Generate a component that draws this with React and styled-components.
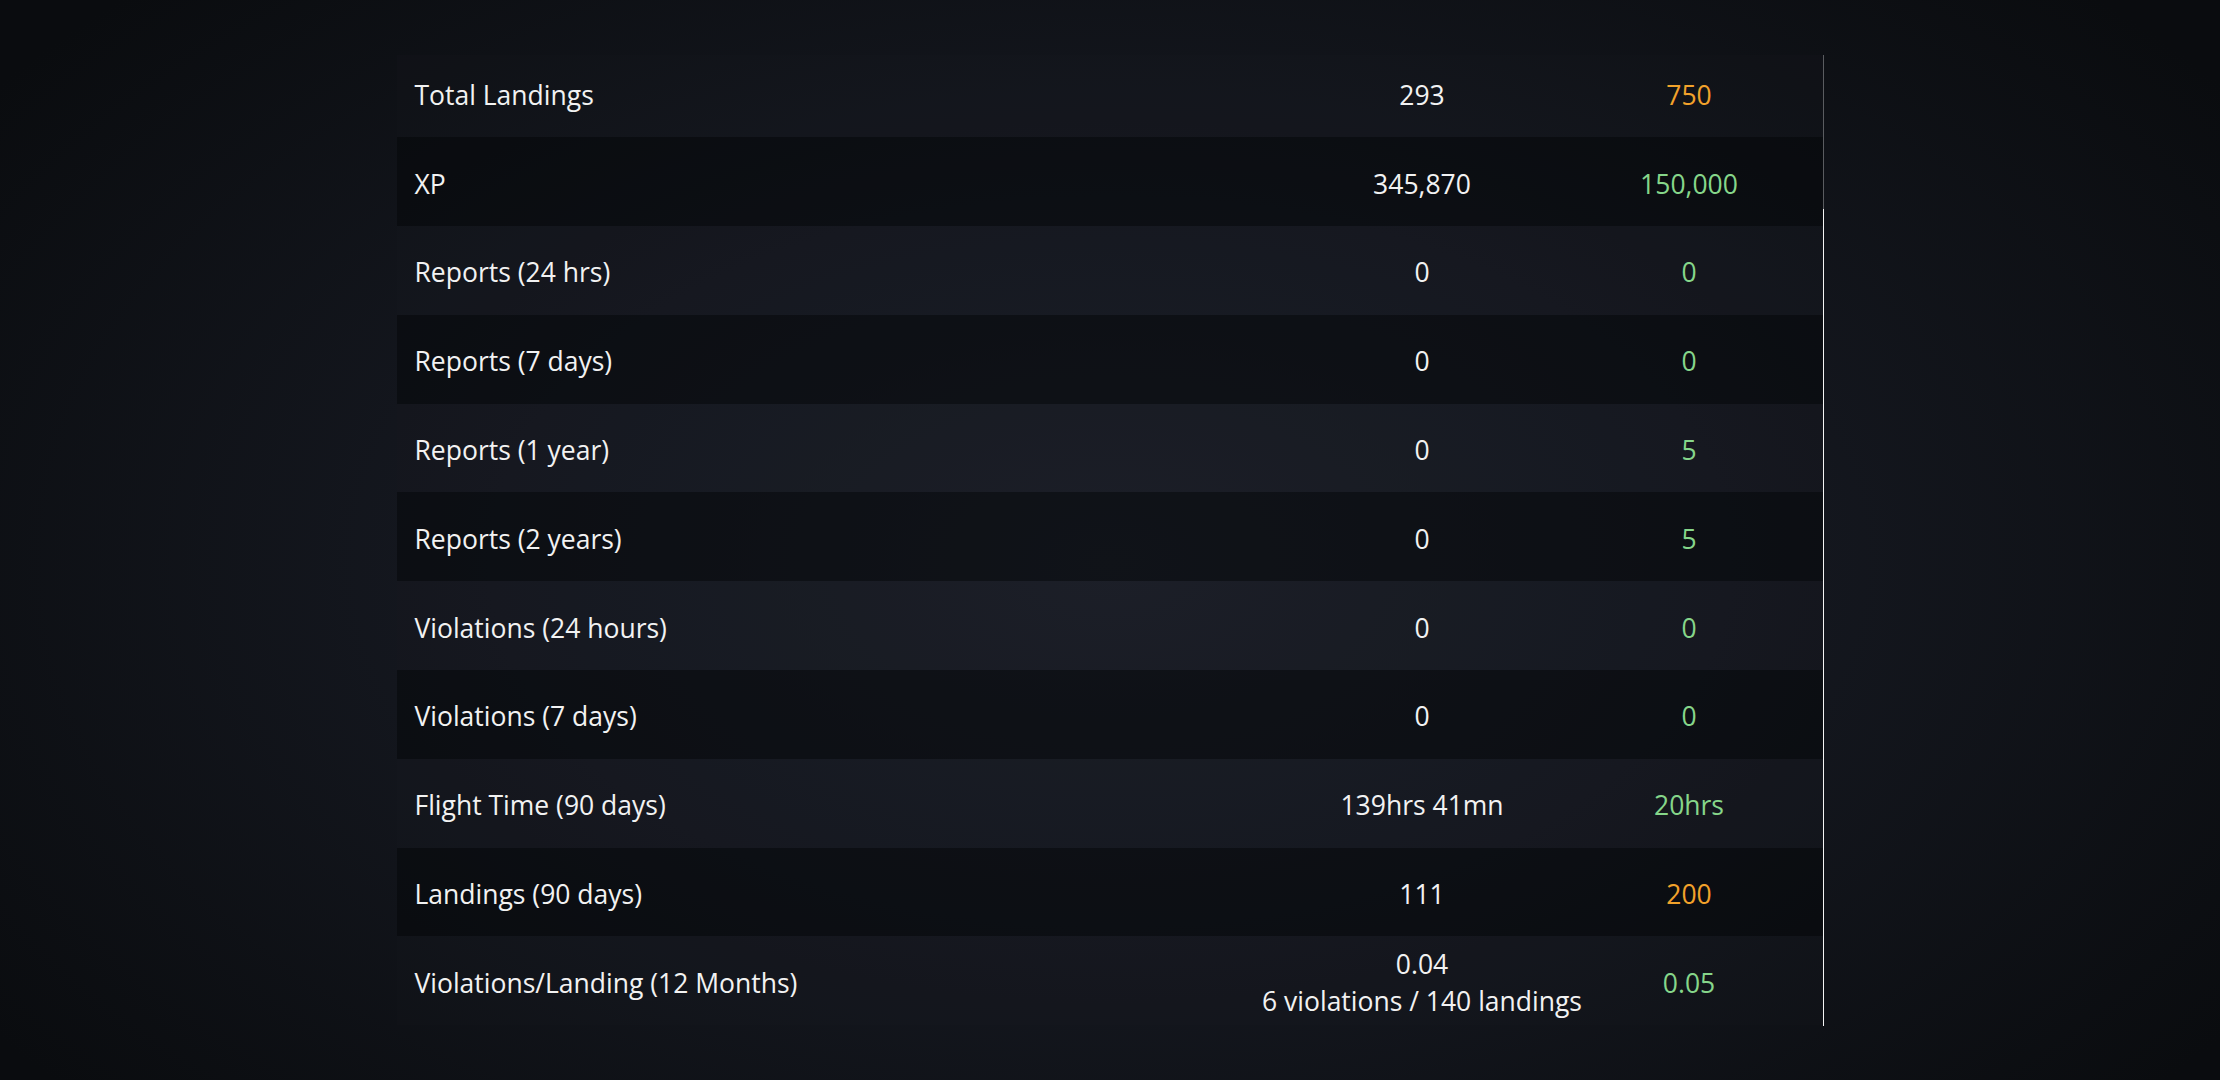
import styled, { createGlobalStyle } from "styled-components";

const GlobalStyle = createGlobalStyle`
  html, body {
    margin: 0;
    padding: 0;
    background: #0b0d11;
  }
  * {
    box-sizing: border-box;
  }
`;

const stats = [
  { label: "Total Landings", value: "293", target: "750", tone: "warn" },
  { label: "XP", value: "345,870", target: "150,000", tone: "ok" },
  { label: "Reports (24 hrs)", value: "0", target: "0", tone: "ok" },
  { label: "Reports (7 days)", value: "0", target: "0", tone: "ok" },
  { label: "Reports (1 year)", value: "0", target: "5", tone: "ok" },
  { label: "Reports (2 years)", value: "0", target: "5", tone: "ok" },
  { label: "Violations (24 hours)", value: "0", target: "0", tone: "ok" },
  { label: "Violations (7 days)", value: "0", target: "0", tone: "ok" },
  { label: "Flight Time (90 days)", value: "139hrs 41mn", target: "20hrs", tone: "ok" },
  { label: "Landings (90 days)", value: "111", target: "200", tone: "warn" },
  {
    label: "Violations/Landing (12 Months)",
    value: "0.04",
    sub: "6 violations / 140 landings",
    target: "0.05",
    tone: "ok",
  },
];

const App = () => {
  return (
    <>
      <GlobalStyle />
      <Page>
        <Panel>
          <Scroller>
            <Rows>
              {stats.map((s, i) => (
                <Row key={s.label} $alt={i % 2 === 1}>
                  <Label>{s.label}</Label>
                  <Value>
                    <span>{s.value}</span>
                    {s.sub && <span>{s.sub}</span>}
                  </Value>
                  <Target $tone={s.tone}>{s.target}</Target>
                </Row>
              ))}
            </Rows>
          </Scroller>
          <Thumb />
        </Panel>
      </Page>
    </>
  );
};

const Page = styled.div`
  min-height: 100vh;
  display: flex;
  align-items: center;
  justify-content: center;
  background: radial-gradient(
    ellipse 62% 75% at 50% 52%,
    #1c2029 0%,
    #151820 45%,
    #0a0c0f 100%
  );
  font-family: "Open Sans", "Noto Sans", sans-serif;
`;

const Panel = styled.div`
  position: relative;
  width: 1427px;
  border-right: 1px solid #5a5c60;
`;

const Scroller = styled.div`
  height: 971px;
  overflow: hidden;
`;

const Rows = styled.div`
  display: flex;
  flex-direction: column;
  margin-top: -6px;
`;

const Row = styled.div`
  display: grid;
  grid-template-columns: 1fr 267px 267px;
  align-items: center;
  height: 88.8px;
  padding-left: 18px;
  padding-top: 5px;
  background: ${(p) => (p.$alt ? "rgba(4, 5, 7, 0.5)" : "rgba(28, 30, 36, 0.14)")};
  color: #f2f2f2;
  font-size: 26.5px;
  line-height: 37px;
`;

const Label = styled.div`
  white-space: nowrap;
`;

const Value = styled.div`
  display: flex;
  flex-direction: column;
  align-items: center;
  text-align: center;
  white-space: nowrap;
`;

const Target = styled.div`
  text-align: center;
  color: ${(p) => (p.$tone === "warn" ? "#f2a22b" : "#86d68a")};
`;

const Thumb = styled.div`
  position: absolute;
  right: -1px;
  top: 154px;
  bottom: 0;
  width: 1px;
  background: #f4f4f4;
`;

export default App;
